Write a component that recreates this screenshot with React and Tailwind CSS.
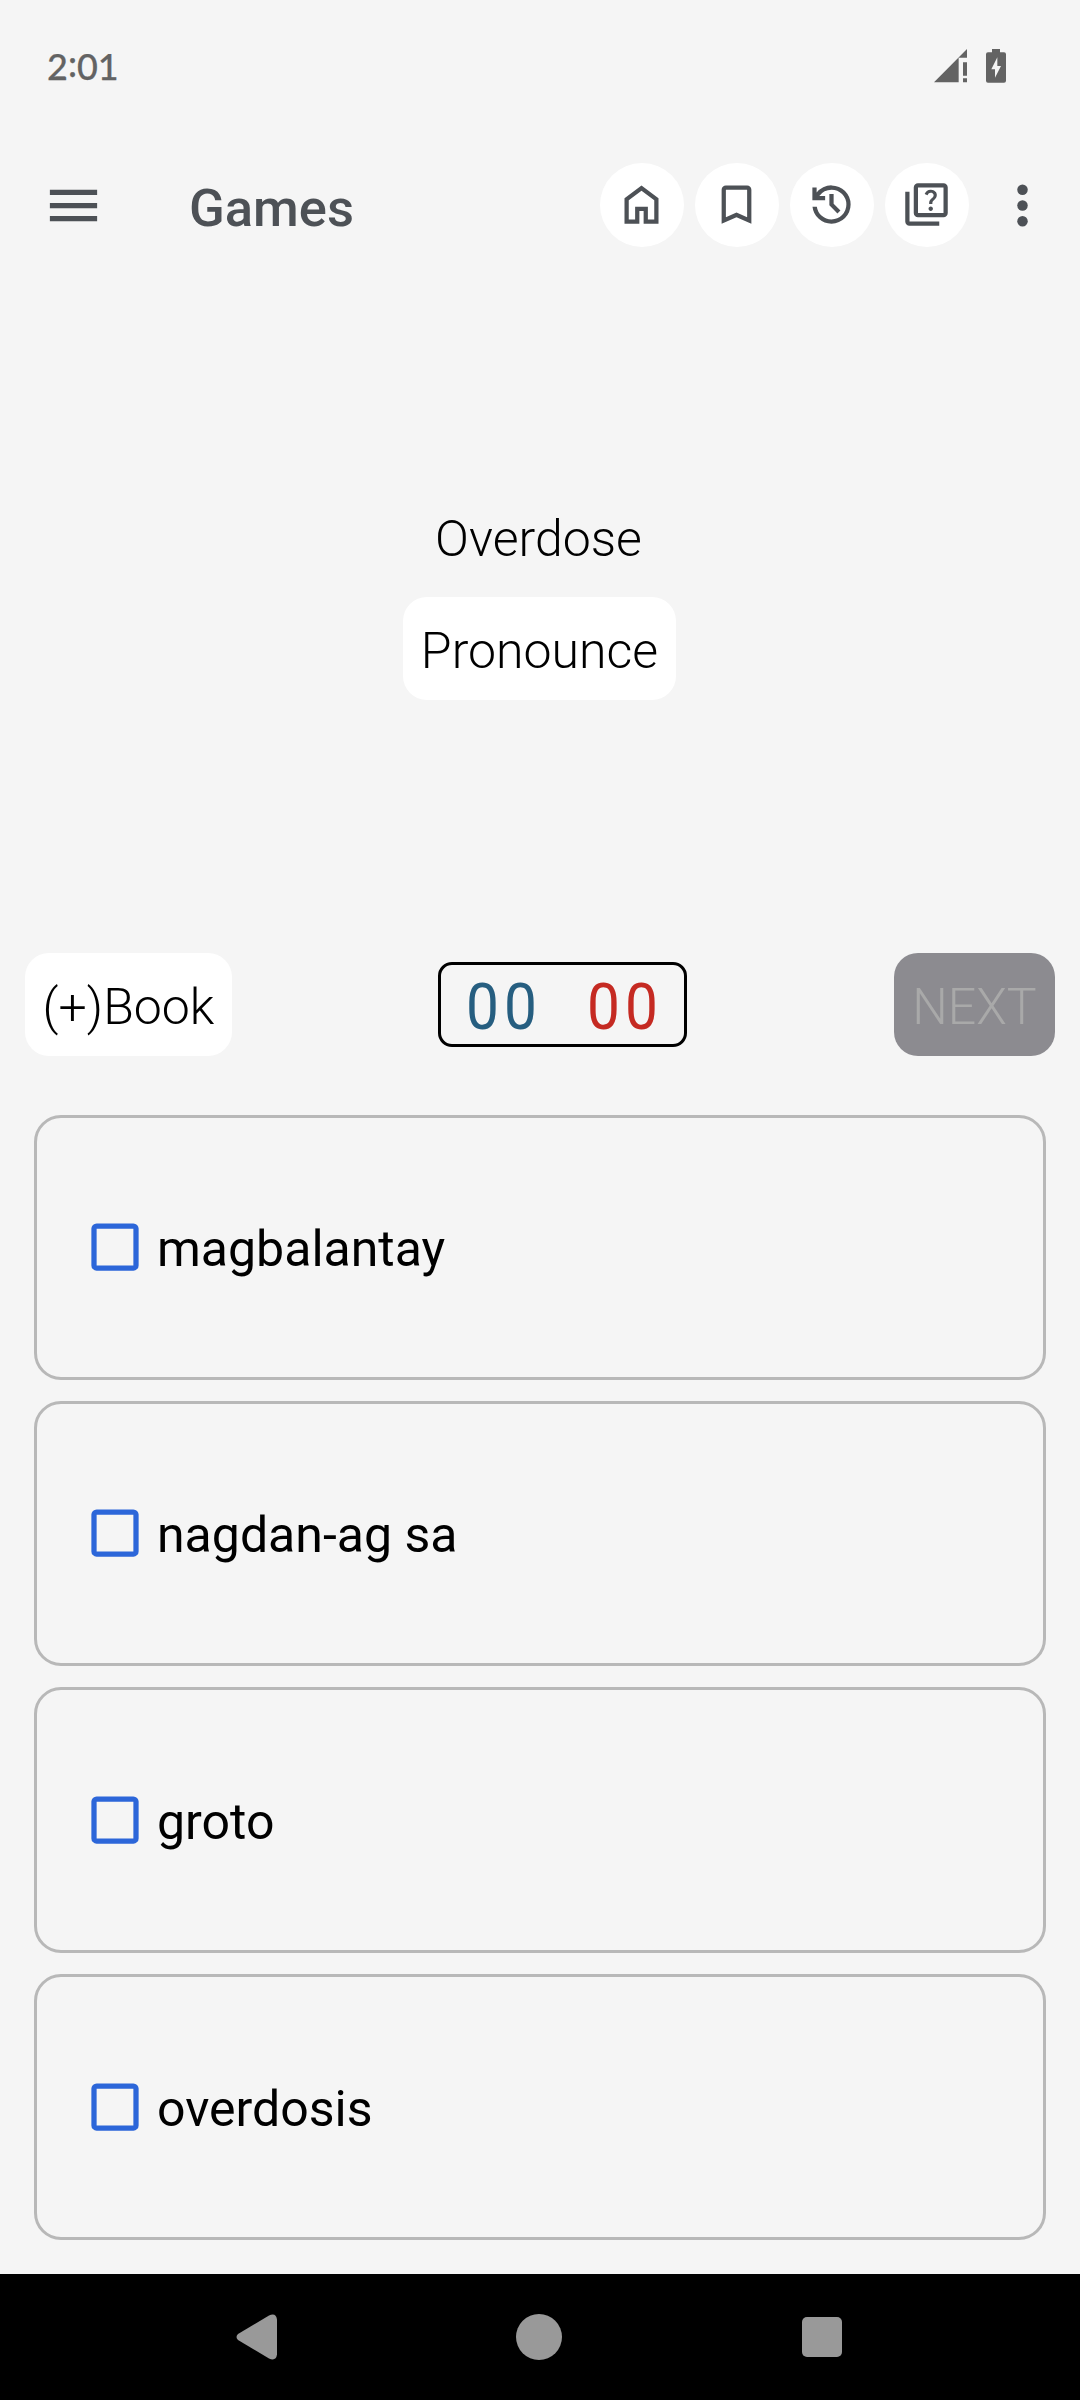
import { useState } from 'react';

const ANSWERS = [
  { texto: 'magbalantay', size: 'h-[265px] pb-px' },
  { texto: 'nagdan-ag sa', size: 'h-[265px] pb-px' },
  { texto: 'groto', size: 'h-[266px]' },
  { texto: 'overdosis', size: 'h-[266px]' },
];

const ACTIONS = [
  {
    id: 'home',
    path: 'M6 19h3v-6h6v6h3v-9l-6-4.5L6 10v9zm-2 2V9l8-6 8 6v12h-7v-6h-2v6H4z',
  },
  {
    id: 'bookmark',
    path: 'M17 3H7c-1.1 0-2 .9-2 2v16l7-3 7 3V5c0-1.1-.9-2-2-2zm0 15l-5-2.18L7 18V5h10v13z',
  },
  {
    id: 'history',
    path: 'M12 21q-3.45 0-6.01-2.29T3.05 13H5.1q.35 2.6 2.31 4.3T12 19q2.93 0 4.96-2.04T19 12t-2.04-4.96T12 5q-1.72 0-3.22.8T6.25 8H9v2H3V4h2v2.35q1.28-1.6 3.11-2.48T12 3q1.88 0 3.51.71t2.85 1.93 1.93 2.85T21 12t-.71 3.51-1.93 2.85-2.85 1.93T12 21zm2.8-4.8L11 12.4V7h2v4.6l3.2 3.2-1.4 1.4z',
  },
  {
    id: 'quiz',
    path: 'M4 6H2v14c0 1.1.9 2 2 2h14v-2H4V6zM20 2H8c-1.1 0-2 .9-2 2v12c0 1.1.9 2 2 2h12c1.1 0 2-.9 2-2V4c0-1.1-.9-2-2-2zm0 14H8V4h12v12zM13.51 10.16c.41-.73 1.18-1.16 1.63-1.8.48-.68.21-1.94-1.14-1.94-.88 0-1.32.67-1.5 1.23l-1.37-.57C11.51 5.96 12.52 5 13.99 5c1.23 0 2.08.56 2.51 1.26.37.6.58 1.73.01 2.57-.63.93-1.23 1.21-1.56 1.81-.13.24-.18.4-.18 1.18h-1.52c.01-.41-.06-1.08.26-1.66zm-.56 3.79c0-.59.47-1.04 1.05-1.04.59 0 1.04.45 1.04 1.04 0 .58-.44 1.05-1.04 1.05-.58 0-1.05-.47-1.05-1.05z',
  },
];

function StatusBar() {
  return (
    <div className="flex h-[132px] items-center justify-between pl-[47px] pr-[74px] text-[#636363]">
      <span className="pb-px font-['Lato',sans-serif] text-[36px] font-medium leading-none [-webkit-text-stroke:0.25px]">
        2<span className="relative -top-[3px]">:</span>01
      </span>
      <div className="flex items-center gap-[19px]">
        <svg className="h-[34px] w-[33px]" viewBox="0 0 99 102" fill="currentColor">
          <path d="M99 0v26H74v74H0zM87 40h12v40H87zM87 88h12v12H87z" />
        </svg>
        <svg className="h-[34px] w-[20px]" viewBox="0 0 60 102" fill="currentColor" fillRule="evenodd">
          <path d="M18 0h24v10h12q6 0 6 6v79q0 6-6 6H6q-6 0-6-6V16q0-6 6-6h12zM34 25L16 61h11v25l18-35H34z" />
        </svg>
      </div>
    </div>
  );
}

function AppBar() {
  return (
    <header className="flex h-[147px] items-center pl-[42px] pr-[26px] text-[#4d5156]">
      <svg className="size-[63px]" viewBox="0 0 24 24" fill="currentColor">
        <path d="M3 18h18v-2H3v2zm0-5h18v-2H3v2zm0-7v2h18V6H3z" />
      </svg>
      <h1 className="ml-[84px] mt-[5px] text-[52.5px] font-medium leading-none">Games</h1>
      <div className="mb-px ml-auto flex gap-[11px]">
        {ACTIONS.map((action) => (
          <button key={action.id} className="flex size-[84px] items-center justify-center rounded-full bg-white">
            <svg className="mb-px mr-px size-[51px]" viewBox="0 0 24 24" fill="currentColor">
              <path d={action.path} />
            </svg>
          </button>
        ))}
      </div>
      <svg className="ml-[22px] size-[63px]" viewBox="0 0 24 24" fill="currentColor">
        <circle cx="12" cy="6" r="2" />
        <circle cx="12" cy="12" r="2" />
        <circle cx="12" cy="18" r="2" />
      </svg>
    </header>
  );
}

function NavBar() {
  return (
    <nav className="flex h-[126px] items-center justify-between bg-black pl-[236px] pr-[238px] text-[#999999]">
      <svg className="h-[46px] w-[41px]" viewBox="0 0 41 46" fill="currentColor">
        <path d="M2 20L33 1.500q7-3 8 4v35q-1 7-8 4L2 26q-3-3 0-6z" />
      </svg>
      <span className="mb-px mr-px size-[46px] rounded-full bg-[#999999]" />
      <span className="size-[40px] rounded-[5px] bg-[#999999]" />
    </nav>
  );
}

export default function App() {
  const [selected, setSelected] = useState(null);

  return (
    <div className="flex h-[2400px] w-[1080px] flex-col bg-[#f5f5f5] font-['Roboto',sans-serif] text-black">
      <StatusBar />
      <AppBar />

      <section className="flex h-[674px] flex-col items-center pr-px pt-[231px] text-[50px] font-light leading-[59px]">
        <p className="mr-[2px]">Overdose</p>
        <button className="mt-[28px] h-[103px] w-[273px] rounded-[24px] bg-white pt-[5px]">Pronounce</button>
      </section>

      <section className="flex h-[103px] items-center justify-between px-[25px] text-[50px] font-light">
        <button className="h-[103px] w-[207px] rounded-[24px] bg-white pt-[5px]">(+)Book</button>
        <div className="mr-px flex h-[85px] w-[249px] items-center gap-[38px] rounded-[14px] border-[3px] border-black pl-[25px] pt-[6px] text-[64px] font-normal leading-none tracking-[5.5px]">
          <span className="origin-left scale-x-[0.915] text-[#265e80]">00</span>
          <span className="origin-left scale-x-[0.915] text-[#c52a22]">00</span>
        </div>
        <button className="h-[103px] w-[161px] rounded-[24px] bg-[#8c8b90] pt-[5px] text-[#a9a9a9]">NEXT</button>
      </section>

      <section className="mt-[59px] flex flex-col gap-[21px] px-[34px]">
        {ANSWERS.map(({ texto, size }) => (
          <button
            key={texto}
            onClick={() => setSelected(texto)}
            className={`flex items-center rounded-[27px] border-[3px] border-[#b8b8b8] pl-[54px] text-left ${size}`}
          >
            <svg
              className={`size-[48px] ${selected === texto ? 'fill-[#2c66d9]' : 'fill-none'}`}
              viewBox="0 0 48 48"
              stroke="#2c66d9"
              strokeWidth="5.25"
            >
              <rect x="3" y="3" width="42" height="42" rx="2.6" />
            </svg>
            <span className="ml-[18px] mt-[4px] text-[50px] leading-none">{texto}</span>
          </button>
        ))}
      </section>

      <div className="mt-auto">
        <NavBar />
      </div>
    </div>
  );
}
